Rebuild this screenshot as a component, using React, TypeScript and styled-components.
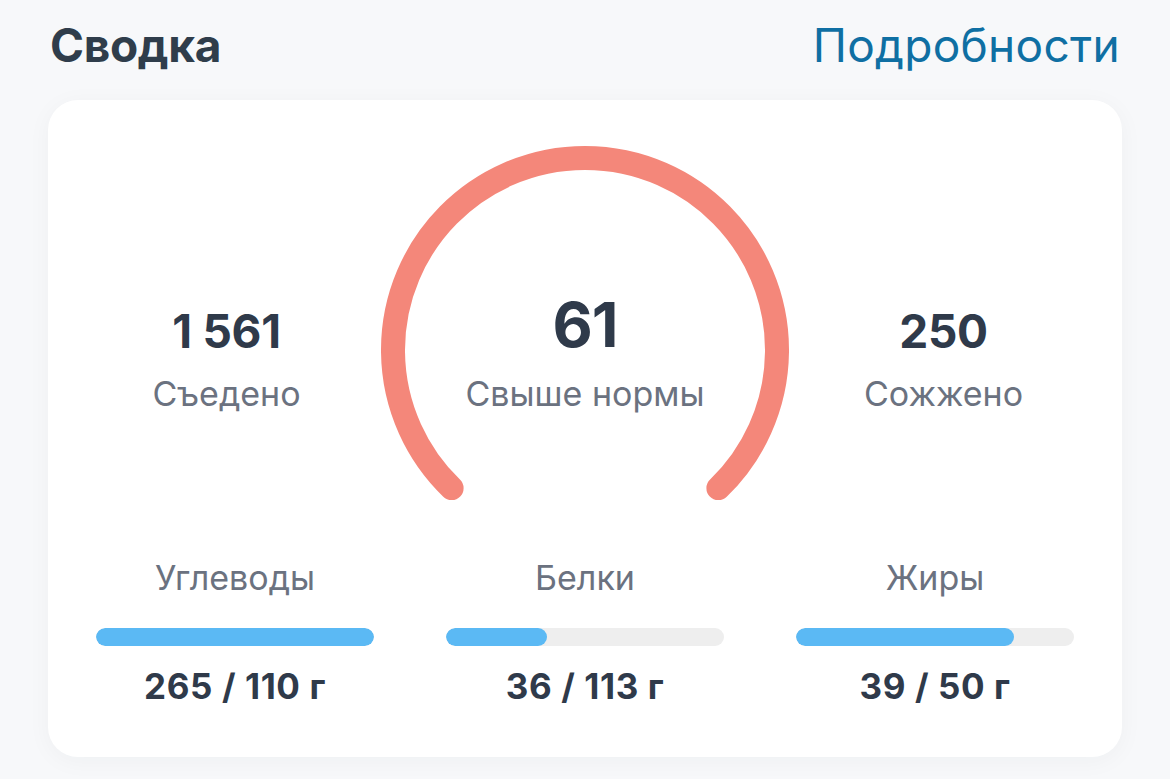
import React from "react";
import styled, { createGlobalStyle } from "styled-components";

const GlobalStyle = createGlobalStyle`
  html, body {
    margin: 0;
    padding: 0;
    background: #f7f8fa;
  }
  body {
    font-family: Inter, "Noto Sans", sans-serif;
    -webkit-font-smoothing: antialiased;
  }
`;

const macros = [
  { name: "Углеводы", value: 265, target: 110, fill: 100 },
  { name: "Белки", value: 36, target: 113, fill: 36.3 },
  { name: "Жиры", value: 39, target: 50, fill: 78.4 },
];

const Gauge = () => (
  <GaugeSvg width="408" height="356" viewBox="0 0 408 356">
    <path
      d="M 70.6 342.1 A 192 192 0 1 1 337.4 342.1"
      fill="none"
      stroke="#f4877a"
      strokeWidth="24"
      strokeLinecap="round"
    />
  </GaugeSvg>
);

const App = () => {
  return (
    <Page>
      <GlobalStyle />
      <Header>
        <Title>Сводка</Title>
        <MoreLink href="#">Подробности</MoreLink>
      </Header>
      <Card>
        <TopRow>
          <Stat>
            <StatValue>1 561</StatValue>
            <StatLabel>Съедено</StatLabel>
          </Stat>
          <GaugeWrap>
            <Gauge />
            <GaugeCenter>
              <GaugeValue>61</GaugeValue>
              <StatLabel>Свыше нормы</StatLabel>
            </GaugeCenter>
          </GaugeWrap>
          <Stat>
            <StatValue>250</StatValue>
            <StatLabel>Сожжено</StatLabel>
          </Stat>
        </TopRow>
        <MacroRow>
          {macros.map((m) => (
            <Macro key={m.name}>
              <StatLabel>{m.name}</StatLabel>
              <Track>
                <Fill style={{ width: `${m.fill}%` }} />
              </Track>
              <MacroValue>
                {m.value} / {m.target} г
              </MacroValue>
            </Macro>
          ))}
        </MacroRow>
      </Card>
    </Page>
  );
};

export default App;

const Page = styled.div`
  padding: 22px 48px 0;
  min-height: 779px;
  box-sizing: border-box;
`;

const Header = styled.div`
  display: flex;
  justify-content: space-between;
  align-items: center;
  padding: 0 2px;
`;

const Title = styled.h1`
  margin: 0;
  font-size: 46px;
  line-height: 1;
  font-weight: 700;
  color: #2f3d4b;
  letter-spacing: -0.3px;
`;

const MoreLink = styled.a`
  font-size: 46px;
  line-height: 1;
  font-weight: 400;
  color: #0f6fa3;
  text-decoration: none;
  letter-spacing: 0.3px;
`;

const Card = styled.div`
  margin-top: 32px;
  background: #ffffff;
  border-radius: 30px;
  box-shadow: 0 4px 24px rgba(30, 40, 60, 0.04);
  padding: 46px 48px 53px;
`;

const TopRow = styled.div`
  display: grid;
  grid-template-columns: 1fr 408px 1fr;
  align-items: start;
  margin: 0 -24px;
`;

const Stat = styled.div`
  display: flex;
  flex-direction: column;
  align-items: center;
  padding-top: 162px;
  gap: 23px;
`;

const StatValue = styled.div`
  font-size: 46px;
  line-height: 1;
  font-weight: 700;
  color: #2f3a4a;
  letter-spacing: -0.3px;
`;

const StatLabel = styled.div`
  font-size: 34px;
  line-height: 1;
  font-weight: 400;
  color: #6b7280;
`;

const GaugeWrap = styled.div`
  position: relative;
  width: 408px;
  height: 356px;
`;

const GaugeSvg = styled.svg`
  display: block;
`;

const GaugeCenter = styled.div`
  position: absolute;
  top: 148px;
  left: 0;
  right: 0;
  display: flex;
  flex-direction: column;
  align-items: center;
  gap: 21px;
`;

const GaugeValue = styled.div`
  font-size: 62px;
  line-height: 1;
  font-weight: 700;
  color: #2f3a4a;
  letter-spacing: -1px;
`;

const MacroRow = styled.div`
  margin-top: 59px;
  display: grid;
  grid-template-columns: repeat(3, 1fr);
  column-gap: 72px;
`;

const Macro = styled.div`
  display: flex;
  flex-direction: column;
  align-items: center;
`;

const Track = styled.div`
  margin-top: 33px;
  width: 100%;
  height: 18px;
  border-radius: 9px;
  background: #eeeeee;
  overflow: hidden;
`;

const Fill = styled.div`
  height: 100%;
  border-radius: 9px;
  background: #5bb9f4;
`;

const MacroValue = styled.div`
  margin-top: 23px;
  font-size: 35px;
  line-height: 1;
  font-weight: 700;
  color: #2f3a4a;
  letter-spacing: 0.6px;
`;
